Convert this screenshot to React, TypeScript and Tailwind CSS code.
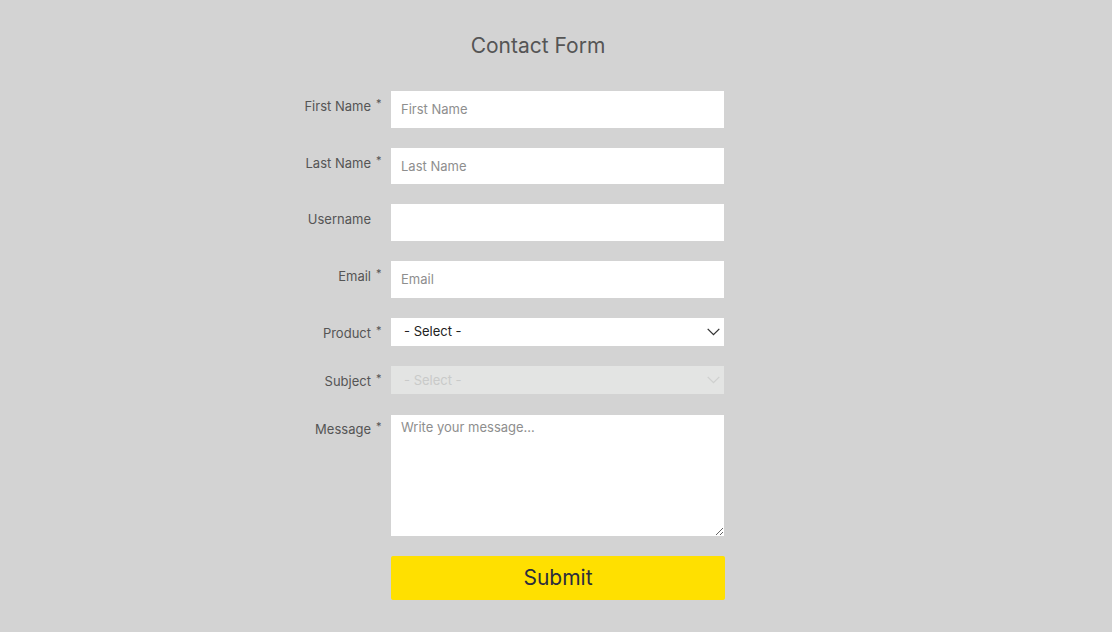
import React from "react";

function Label({ text, required, pt }: { text: string; required?: boolean; pt: string }) {
  return (
    <div className={`w-[85px] shrink-0 flex justify-end text-[13px] leading-[20px] text-[#555555] ${pt}`}>
      <span>{text}</span>
      <span className="w-[11px] text-[11px] leading-[14px] pl-[5px] text-[#555555]">{required ? "*" : ""}</span>
    </div>
  );
}

function Chevron({ color }: { color: string }) {
  return (
    <svg width="13" height="8" viewBox="0 0 13 8" fill="none" className="absolute right-[4px] top-1/2 -translate-y-1/2 pointer-events-none">
      <path d="M0.7 0.9 L6.5 6.7 L12.3 0.9" stroke={color} strokeWidth="1.3" />
    </svg>
  );
}

export default function App() {
  const inputCls =
    "ml-[9px] w-[333px] h-[36.67px] bg-white px-[10px] text-[13px] text-[#222] placeholder:text-[#8e8e8e] outline-none border-0";
  return (
    <div className="min-h-screen bg-[#d3d3d3] font-['Inter',sans-serif] pt-[32px] pb-[32px]">
      <div className="ml-[297px] w-[482px]">
        <h1 className="text-center text-[21px] leading-[28px] text-[#555555] mb-[31px]">Contact Form</h1>

        <div className="flex mb-[20px]">
          <Label text="First Name" required pt="pt-[5px]" />
          <input className={inputCls} placeholder="First Name" />
        </div>
        <div className="flex mb-[20px]">
          <Label text="Last Name" required pt="pt-[5px]" />
          <input className={inputCls} placeholder="Last Name" />
        </div>
        <div className="flex mb-[20px]">
          <Label text="Username" pt="pt-[5px]" />
          <input className={inputCls} />
        </div>
        <div className="flex mb-[20px]">
          <Label text="Email" required pt="pt-[5px]" />
          <input className={inputCls} placeholder="Email" />
        </div>

        <div className="flex mb-[20px]">
          <Label text="Product" required pt="pt-[5px]" />
          <div className="relative ml-[9px] w-[333px] h-[28px]">
            <select className="appearance-none w-full h-full bg-white pl-[13px] pt-[1px] text-[13px] text-[#222] outline-none border-0 rounded-none">
              <option>- Select -</option>
            </select>
            <Chevron color="#333333" />
          </div>
        </div>

        <div className="flex mb-[20.67px]">
          <Label text="Subject" required pt="pt-[5px]" />
          <div className="relative ml-[9px] w-[333px] h-[28.33px]">
            <select disabled className="appearance-none w-full h-full bg-[#e3e4e3] pl-[13px] pt-[2px] text-[13px] text-[#c9cac9] outline-none border-0 rounded-none opacity-100">
              <option>- Select -</option>
            </select>
            <Chevron color="#cfd0cf" />
          </div>
        </div>

        <div className="flex mb-[20px]">
          <Label text="Message" required pt="pt-[4px]" />
          <textarea
            className="ml-[9px] w-[333px] h-[121px] bg-white px-[10px] pt-[2px] text-[13px] leading-[20px] text-[#222] placeholder:text-[#8e8e8e] outline-none border-0 rounded-none block"
            placeholder="Write your message..."
          />
        </div>

        <div className="flex">
          <div className="w-[85px] shrink-0" />
          <button className="ml-[9px] w-[334px] h-[44.33px] bg-[#ffe000] rounded-[2px] text-[21px] text-[#2b2d3e]">
            Submit
          </button>
        </div>
      </div>
    </div>
  );
}
